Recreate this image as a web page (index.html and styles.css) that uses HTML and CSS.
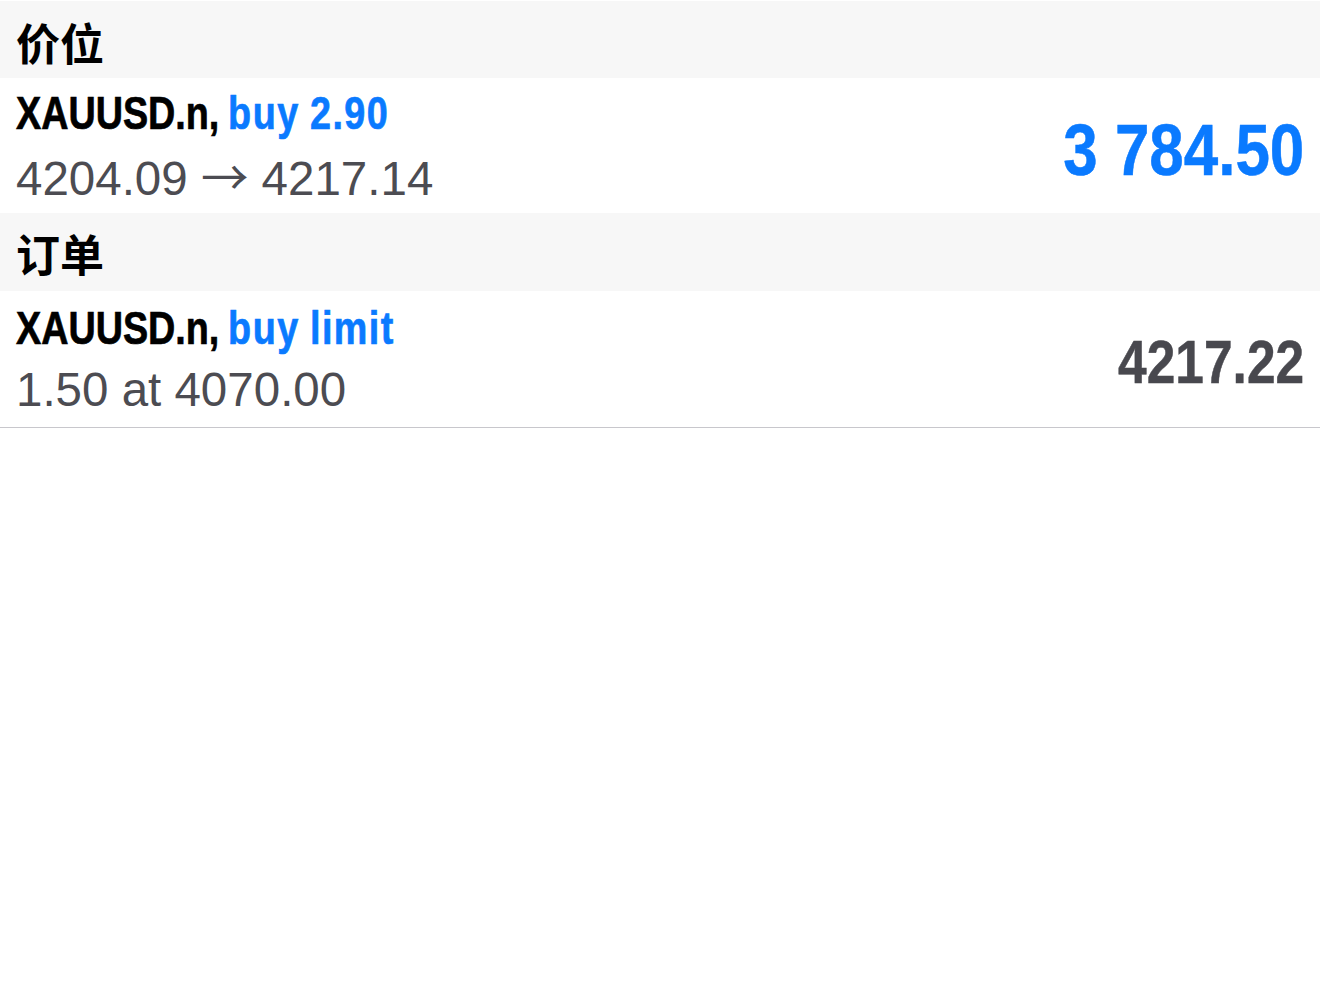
FILE: index.html
```html
<!DOCTYPE html>
<html lang="zh">
<head>
<meta charset="utf-8">
<title>交易</title>
<link rel="stylesheet" href="styles.css">
</head>
<body>
<div class="list">
  <div class="section-header section-first">价位</div>
  <div class="row">
    <div class="info">
      <div class="title"><span class="symbol">XAUUSD.n,</span> <span class="action">buy 2.90</span></div>
      <div class="detail">4204.09 <span class="arrow">→</span> 4217.14</div>
    </div>
    <div class="value value-blue">3 784.50</div>
  </div>
  <div class="section-header">订单</div>
  <div class="row row-last">
    <div class="info">
      <div class="title"><span class="symbol">XAUUSD.n,</span> <span class="action">buy limit</span></div>
      <div class="detail">1.50 at 4070.00</div>
    </div>
    <div class="value value-gray">4217.22</div>
  </div>
</div>
</body>
</html>
```

FILE: styles.css
```css
html, body {
  margin: 0;
  padding: 0;
  background: #ffffff;
}

.list {
  padding-top: 1px;
}

.section-header {
  height: 78px;
  background: #f7f7f7;
  display: flex;
  align-items: center;
  padding: 2px 0 0 16px;
  box-sizing: border-box;
  font-family: "Noto Sans CJK SC", sans-serif;
  font-weight: 700;
  font-size: 44px;
  color: #000000;
}

.section-first {
  height: 77px;
  padding-top: 4px;
}

.row {
  height: 135px;
  box-sizing: border-box;
  display: flex;
  align-items: center;
  justify-content: space-between;
  padding: 0 16px;
}

.row-last {
  height: 137px;
  border-bottom: 1px solid #c8c7cc;
}

.info {
  display: flex;
  flex-direction: column;
}

.title {
  font-family: "Liberation Sans", Arial, sans-serif;
  font-weight: 700;
  font-size: 46px;
  line-height: 62px;
  white-space: nowrap;
  word-spacing: -2px;
  -webkit-text-stroke: 0.7px currentColor;
  transform: scaleX(0.82);
  transform-origin: left center;
}

.symbol {
  color: #000000;
}

.action {
  color: #0a7aff;
  letter-spacing: 1.8px;
}

.detail {
  font-family: "Liberation Sans", Arial, sans-serif;
  font-size: 47.5px;
  line-height: 62px;
  color: #4c4c52;
  white-space: nowrap;
}

.arrow {
  font-family: "Noto Sans CJK SC", sans-serif;
  font-weight: 400;
}

.value {
  font-family: "Liberation Sans", Arial, sans-serif;
  font-weight: 700;
  white-space: nowrap;
  -webkit-text-stroke: 0.5px currentColor;
  transform-origin: right center;
}

.value-blue {
  font-size: 72px;
  color: #0a7aff;
  padding-top: 8px;
  transform: scaleX(0.86);
}

.value-gray {
  font-size: 62px;
  color: #48484e;
  padding-top: 5px;
  transform: scaleX(0.83);
}
```
